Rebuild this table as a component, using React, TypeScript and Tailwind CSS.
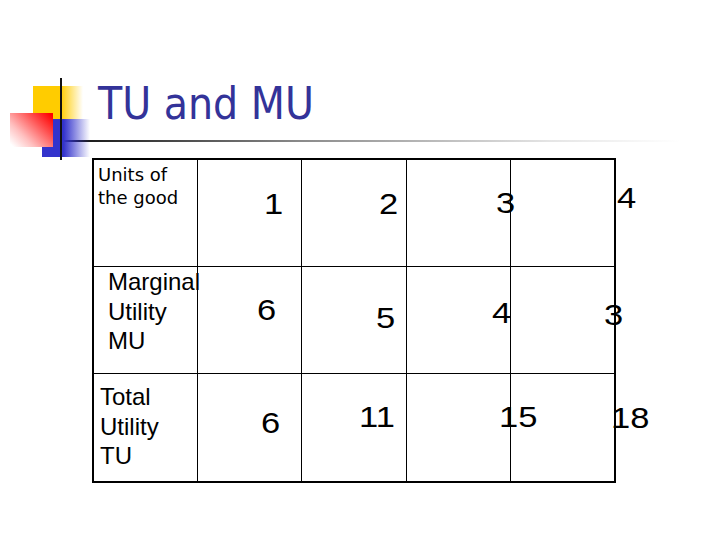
import React from "react";

type Cell = { v: string; pos: string };

type Row = {
  label: string[];
  labelCls: string;
  cells: Cell[];
};

const rows: Row[] = [
  {
    label: ["Units of", "the good"],
    labelCls: "pl-[4px] pt-[3px] font-['DejaVu_Sans'] text-[18px] leading-[23px]",
    cells: [
      { v: "1", pos: "pl-[66px] pt-[29px]" },
      { v: "2", pos: "pl-[77px] pt-[29px]" },
      { v: "3", pos: "pl-[89px] pt-[28px]" },
      { v: "4", pos: "pl-[106px] pt-[23px]" },
    ],
  },
  {
    label: ["Marginal", "Utility", "MU"],
    labelCls: "pl-[14px] pt-0 text-[24px] leading-[29.5px]",
    cells: [
      { v: "6", pos: "pl-[59px] pt-[28px]" },
      { v: "5", pos: "pl-[74px] pt-[36px]" },
      { v: "4", pos: "pl-[85px] pt-[31px]" },
      { v: "3", pos: "pl-[93px] pt-[33px]" },
    ],
  },
  {
    label: ["Total", "Utility", "TU"],
    labelCls: "pl-[6px] pt-[8px] text-[24px] leading-[29.5px]",
    cells: [
      { v: "6", pos: "pl-[63px] pt-[34px]" },
      { v: "11", pos: "pl-[57px] pt-[28px]" },
      { v: "15", pos: "pl-[92px] pt-[28px]" },
      { v: "18", pos: "pl-[100px] pt-[29px]" },
    ],
  },
];

function Logo() {
  return (
    <svg
      className="absolute left-[8px] top-[76px]"
      width="90"
      height="86"
      viewBox="8 76 90 86"
    >
      <defs>
        <linearGradient id="yel" x1="0" y1="0" x2="1" y2="0">
          <stop offset="0" stopColor="#ffcc00" />
          <stop offset="0.55" stopColor="#ffcc00" />
          <stop offset="1" stopColor="#ffcc00" stopOpacity="0" />
        </linearGradient>
        <linearGradient id="blu" x1="0" y1="0" x2="1" y2="0">
          <stop offset="0" stopColor="#3333cc" />
          <stop offset="0.45" stopColor="#3333cc" />
          <stop offset="1" stopColor="#3333cc" stopOpacity="0" />
        </linearGradient>
        <linearGradient id="red" x1="1" y1="0.1" x2="0" y2="0.9">
          <stop offset="0" stopColor="#ff0000" />
          <stop offset="0.3" stopColor="#ff5050" />
          <stop offset="0.7" stopColor="#ffc0c0" />
          <stop offset="1" stopColor="#ffffff" />
        </linearGradient>
      </defs>
      <rect x="33" y="86" width="50" height="33" fill="url(#yel)" />
      <rect x="42" y="119" width="48" height="38" fill="url(#blu)" />
      <rect x="10" y="113" width="43" height="34" fill="url(#red)" />
      <rect x="60" y="78" width="2" height="82" fill="#111" />
    </svg>
  );
}

export default function App() {
  return (
    <div className="relative w-[720px] h-[540px] overflow-hidden bg-white font-['Liberation_Sans',Arial,sans-serif] text-black">
      <div className="pt-[82px] pl-[98px]">
        <h1 className="font-['DejaVu_Sans_Condensed','DejaVu_Sans',sans-serif] text-[44px] leading-[44px] text-[#333399]">
          TU and MU
        </h1>
      </div>
      <div className="mt-[14px] ml-[35px] h-[2px] w-[645px] bg-[linear-gradient(to_right,#000_0%,#8a8a8a_41%,#e5e5e5_80%,#fff_100%)]" />

      <div className="mt-[16px] ml-[92px] grid w-[524px] grid-cols-[104px_104px_105px_104px_103px] grid-rows-[107px_107px_107px] border-2 border-black">
        {rows.map((row, r) => (
          <React.Fragment key={r}>
            <div className={`border-r border-black ${r < 2 ? "border-b" : ""}`}>
              <div className={`whitespace-nowrap ${row.labelCls}`}>
                {row.label.map((l) => (
                  <div key={l}>{l}</div>
                ))}
              </div>
            </div>
            {row.cells.map((c, i) => (
              <div
                key={i}
                className={`min-w-0 border-black ${i < 3 ? "border-r" : ""} ${r < 2 ? "border-b" : ""}`}
              >
                <div className={`whitespace-nowrap text-[30px] leading-[30px] ${c.pos}`}>
                  <span className="inline-block origin-left scale-x-115">{c.v}</span>
                </div>
              </div>
            ))}
          </React.Fragment>
        ))}
      </div>

      <Logo />
    </div>
  );
}
